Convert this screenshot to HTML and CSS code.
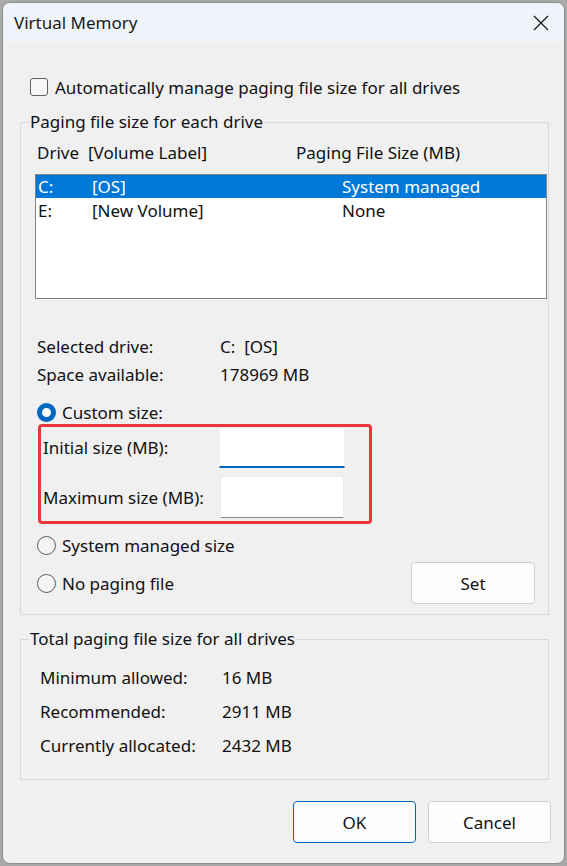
FILE: index.html
```html
<!DOCTYPE html>
<html>
<head>
<meta charset="utf-8">
<link rel="stylesheet" href="styles.css">
</head>
<body>
<div class="window">
  <div class="titlebar">
    <span class="title">Virtual Memory</span>
    <svg class="close" width="16" height="16" viewBox="0 0 16 16"><path d="M1 1 L15 15 M15 1 L1 15" stroke="#1a1a1a" stroke-width="1.3" fill="none"/></svg>
  </div>
  <div class="content">
    <div class="check-row"><span class="checkbox"></span><span>Automatically manage paging file size for all drives</span></div>

    <fieldset class="group group-drive">
      <legend>Paging file size for each drive</legend>
      <div class="list-header"><span>Drive</span><span>[Volume Label]</span><span>Paging File Size (MB)</span></div>
      <div class="listbox">
        <div class="row selected"><span>C:</span><span>[OS]</span><span>System managed</span></div>
        <div class="row"><span>E:</span><span>[New Volume]</span><span>None</span></div>
      </div>
      <div class="info">
        <span>Selected drive:</span><span>C:&nbsp;&nbsp;[OS]</span>
        <span>Space available:</span><span>178969 MB</span>
      </div>
      <div class="radio-row custom"><span class="radio checked"></span><span>Custom size:</span></div>
      <div class="highlight">
        <span class="field-label">Initial size (MB):</span><span class="input focused"></span>
        <span class="field-label">Maximum size (MB):</span><span class="input tall"></span>
      </div>
      <div class="radio-row system"><span class="radio"></span><span>System managed size</span></div>
      <div class="set-row">
        <div class="radio-row"><span class="radio"></span><span>No paging file</span></div>
        <button class="btn set">Set</button>
      </div>
    </fieldset>

    <fieldset class="group group-total">
      <legend>Total paging file size for all drives</legend>
      <div class="totals">
        <span>Minimum allowed:</span><span>16 MB</span>
        <span>Recommended:</span><span>2911 MB</span>
        <span>Currently allocated:</span><span>2432 MB</span>
      </div>
    </fieldset>

    <div class="buttons">
      <button class="btn primary">OK</button>
      <button class="btn">Cancel</button>
    </div>
  </div>
</div>
</body>
</html>
```

FILE: styles.css
```css
* { box-sizing: border-box; }
html, body { margin: 0; padding: 0; }
body {
  background: #a9a9a9;
  width: 567px;
  height: 866px;
  overflow: hidden;
  font-family: "Segoe UI", "Noto Sans", sans-serif;
  font-size: 17px;
  color: #111;
}
.window {
  margin: 2px 0 0 2px;
  width: 563px;
  height: 862px;
  border: 1px solid #8c8c8c;
  border-radius: 8px;
  background: #f0f0f0;
  overflow: hidden;
}
.titlebar {
  height: 39px;
  background: #eef4f9;
  display: flex;
  align-items: center;
  justify-content: space-between;
  padding: 0 15px 0 11px;
}
.title { font-size: 17px; color: #1a1a1a; }
.close { display: block; }

.content {
  padding: 33px 15px 0 17px;
}
.check-row {
  height: 24px;
  display: flex;
  align-items: center;
  margin-left: 10px;
}
.checkbox {
  width: 18px;
  height: 18px;
  border: 1px solid #616161;
  border-radius: 3px;
  background: #f7f7f7;
  margin-right: 7px;
}

.group {
  margin: 11px 0 0 0;
  padding: 0 1px 0 14px;
  border: 1px solid #dadada;
  min-width: 0;
}
.group legend {
  padding: 0 1px;
  margin-left: -6px;
  line-height: 24px;
  height: 24px;
}
.list-header {
  margin-top: 6px;
  height: 24px;
  display: grid;
  grid-template-columns: 51px 208px 1fr;
  align-items: center;
  padding-left: 2px;
}
.listbox {
  margin-top: 10px;
  height: 125px;
  border: 1px solid #828282;
  background: #fff;
}
.row {
  height: 23px;
  display: grid;
  grid-template-columns: 54px 250px 1fr;
  align-items: center;
  padding-left: 2px;
}
.row + .row { height: 25px; }
.row.selected { background: #0078d7; color: #fff; }

.info {
  margin-top: 33px;
  display: grid;
  grid-template-columns: 183px 1fr;
  grid-auto-rows: 28px;
  align-items: center;
  padding-left: 2px;
}
.radio-row {
  height: 24px;
  display: flex;
  align-items: center;
  margin-top: 12px;
  padding-left: 2px;
}
.radio-row.custom { margin-top: 13px; height: 23px; }
.radio {
  width: 19px;
  height: 19px;
  border-radius: 50%;
  border: 1px solid #5c5c5c;
  background: #f5f5f5;
  margin-right: 6px;
  flex: none;
}
.radio.checked {
  border: 5px solid #0067c0;
  background: #fff;
}
.highlight {
  margin-left: 3px;
  width: 334px;
  border: 3px solid #e8383d;
  border-radius: 4px;
  padding: 0 24px 3px 1px;
  display: grid;
  grid-template-columns: 177px 1fr;
  row-gap: 8px;
  align-items: center;
}
.field-label { padding-left: 1px; }
.input {
  height: 41px;
  background: #fff;
  border: 1px solid #ececec;
  border-bottom: 1px solid #8a8a8a;
  border-radius: 3px 3px 0 0;
}
.input.tall { height: 42px; margin-left: 1px; margin-right: 1px; }
.input.focused { border-bottom: 2px solid #0067c0; }

.radio-row.system { margin-top: 9px; }
.set-row {
  margin-top: 5px;
  height: 42px;
  display: flex;
  align-items: center;
  justify-content: space-between;
  padding-right: 12px;
  margin-bottom: 10px;
}
.set-row .radio-row { margin-top: 0; }

.btn {
  font-family: inherit;
  font-size: 17px;
  color: #111;
  background: #fdfdfd;
  border: 1px solid #d0d0d0;
  border-radius: 4px;
  height: 42px;
  width: 123px;
  padding: 0;
}
.btn.set { width: 124px; }
.btn.primary { border-color: #0067c0; }

.group-total { margin-top: 12px; padding-bottom: 17px; }
.totals {
  margin-top: 9px;
  display: grid;
  grid-template-columns: 182px 1fr;
  grid-auto-rows: 34px;
  align-items: center;
  padding-left: 5px;
}
.buttons {
  margin-top: 21px;
  margin-right: -2px;
  display: flex;
  justify-content: flex-end;
  gap: 12px;
}
```
